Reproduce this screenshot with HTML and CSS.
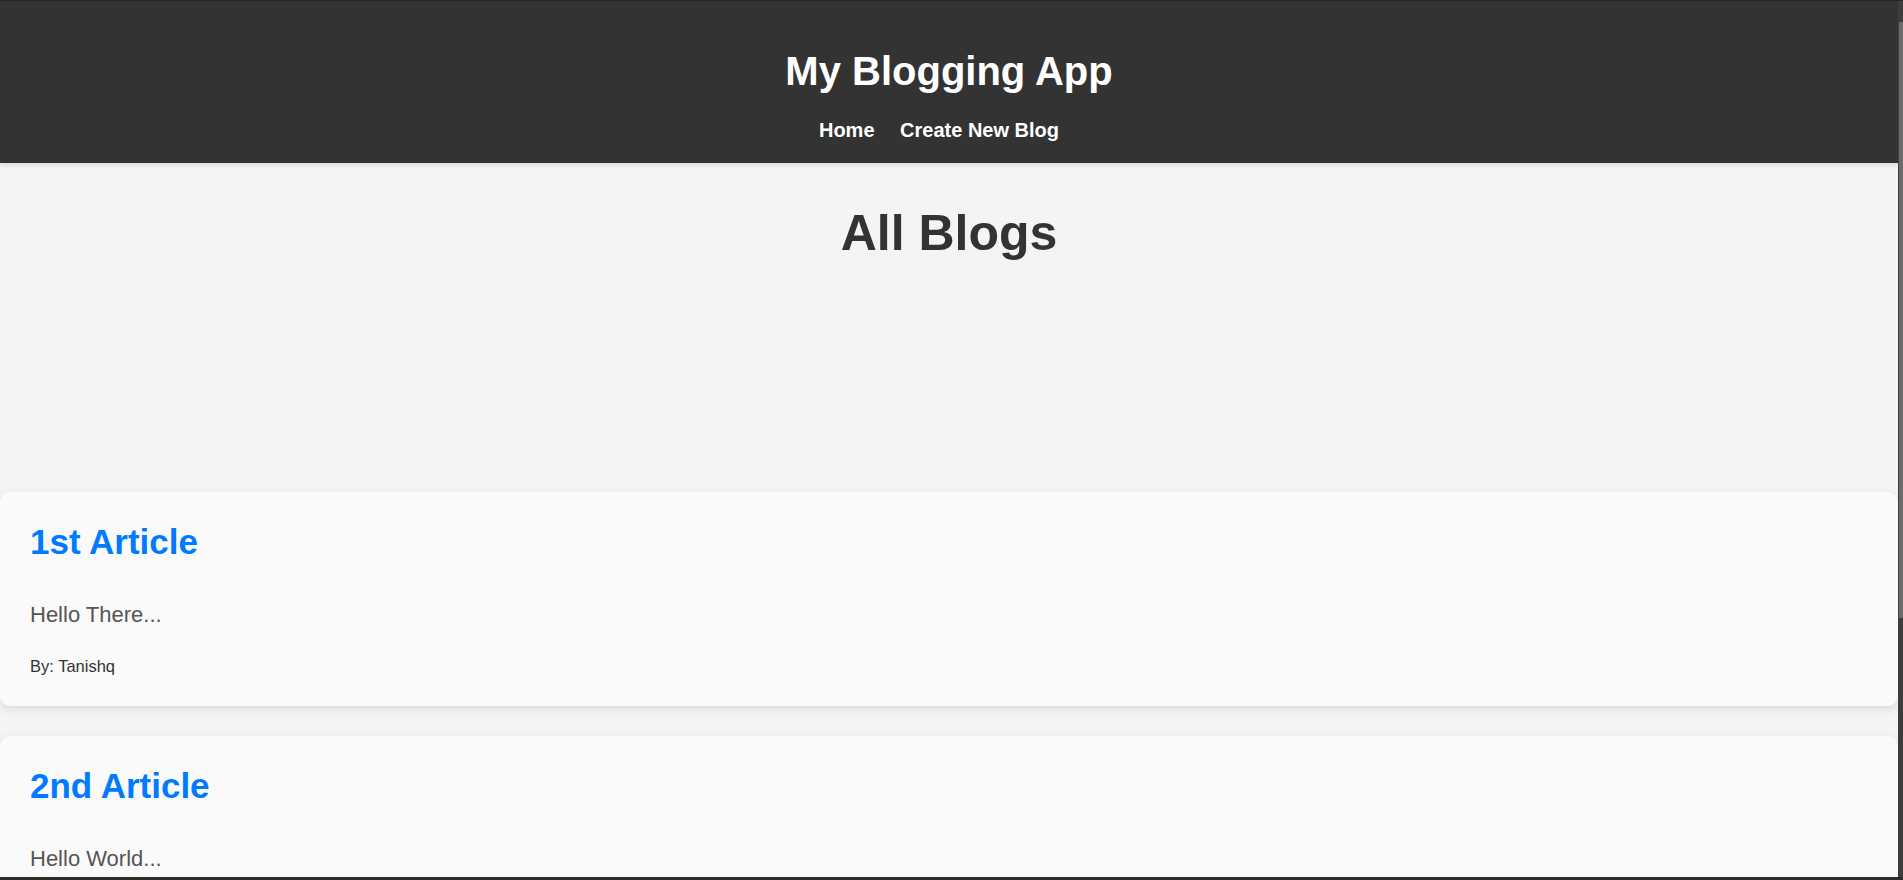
FILE: index.html
```html
<!DOCTYPE html>
<html lang="en">
<head>
<meta charset="utf-8">
<title>My Blogging App</title>
<link rel="stylesheet" href="styles.css">
</head>
<body>
<div class="screen">
  <div class="page">
    <header class="site-header">
      <h1 class="site-title">My Blogging App</h1>
      <nav class="site-nav"><a href="#">Home</a> <a href="#">Create New Blog</a></nav>
    </header>
    <main class="content">
      <h1 class="page-title">All Blogs</h1>
      <div class="blog-list">
        <article class="blog-card">
          <h2 class="blog-title"><a href="#">1st Article</a></h2>
          <p class="blog-excerpt">Hello There...</p>
          <p class="blog-author">By: Tanishq</p>
        </article>
        <article class="blog-card">
          <h2 class="blog-title"><a href="#">2nd Article</a></h2>
          <p class="blog-excerpt">Hello World...</p>
          <p class="blog-author">By: Tanishq</p>
        </article>
      </div>
    </main>
  </div>
  <div class="scrollbar"><div class="thumb"></div></div>
</div>
</body>
</html>
```
FILE: styles.css
```css
html, body {
  margin: 0;
  padding: 0;
  height: 100%;
  overflow: hidden;
}
body {
  font-family: "Liberation Sans", Arial, sans-serif;
  background: #f4f4f4;
}
.screen {
  box-sizing: border-box;
  height: 880px;
  display: grid;
  grid-template-columns: 1fr 5px;
  border-top: 1px solid #24272a;
  border-bottom: 3px solid #283026;
  overflow: hidden;
}
.page {
  min-width: 0;
  overflow: hidden;
  background: #f4f4f4;
}
.scrollbar {
  background: #3d3d3d;
  padding: 21px 0 0 1px;
}
.thumb {
  width: 4px;
  height: 596px;
  background: #6b6b6b;
}
.site-header {
  position: relative;
  z-index: 1;
  background: #333333;
  color: #ffffff;
  text-align: center;
  padding: 47px 0 21px;
  box-shadow: 0 2px 5px rgba(0, 0, 0, 0.12);
}
.site-title {
  margin: 0 0 25px;
  font-size: 40px;
  line-height: 46px;
  font-weight: bold;
}
.site-nav {
  font-size: 20px;
  line-height: 23px;
  font-weight: bold;
}
.site-nav a {
  color: #ffffff;
  text-decoration: none;
  margin-right: 20px;
}
.content {
  padding-top: 41px;
}
.page-title {
  margin: 0 0 230px;
  text-align: center;
  font-size: 50px;
  line-height: 58px;
  color: #333333;
  font-weight: bold;
}
.blog-list {
  display: flex;
  flex-direction: column;
  gap: 30px;
}
.blog-card {
  background: #fafafa;
  border-radius: 10px;
  box-shadow: 0 3px 10px rgba(0, 0, 0, 0.1);
  padding: 30px 30px 31px;
}
.blog-title {
  margin: 0 0 40px;
  font-size: 35px;
  line-height: 40px;
  font-weight: bold;
}
.blog-title a {
  color: #007bff;
  text-decoration: none;
}
.blog-excerpt {
  margin: 0 0 30px;
  font-size: 22px;
  line-height: 25px;
  color: #555555;
}
.blog-author {
  margin: 0;
  font-size: 16.5px;
  line-height: 18px;
  color: #333333;
}
```
